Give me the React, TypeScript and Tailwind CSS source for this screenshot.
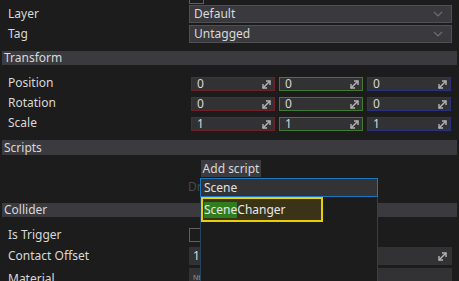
import React from "react";

const Expand = () => (
  <svg width="11" height="11" viewBox="0 0 11 11" className="shrink-0">
    <path d="M2 9 L9 2" stroke="#b4b4b4" strokeWidth="1.4" />
    <path d="M5 2 H9 V6" stroke="#b4b4b4" strokeWidth="1.4" fill="none" />
    <path d="M2 5 V9 H6" stroke="#b4b4b4" strokeWidth="1.4" fill="none" />
  </svg>
);

const Chevron = () => (
  <svg width="10" height="6" viewBox="0 0 10 6">
    <path d="M1 1 L5 5 L9 1" stroke="#6e6e72" strokeWidth="1.2" fill="none" />
  </svg>
);

const Dropdown = ({ value }: { value: string }) => (
  <div className="w-[263px] h-[18px] bg-[#3a3a3e] border border-[#505054] flex items-center justify-between pl-[4px] pr-[8px]">
    <span className="leading-none">{value}</span>
    <Chevron />
  </div>
);

const VecInput = ({ v, border }: { v: string; border: string }) => (
  <div className={`w-[84px] h-[14px] bg-[#323235] border ${border} flex items-center justify-between pl-[5px] pr-[2px]`}>
    <span className="leading-none">{v}</span>
    <Expand />
  </div>
);

const VecRow = ({ label, v }: { label: string; v: string }) => (
  <div className="h-[14px] flex items-center">
    <div className="w-[191px] pl-[8px] -mt-[3px]">{label}</div>
    <div className="flex gap-[4px]">
      <VecInput v={v} border="border-[#6e2228]" />
      <VecInput v={v} border="border-[#3f7a2e]" />
      <VecInput v={v} border="border-[#2a2f7e]" />
    </div>
  </div>
);

const Header = ({ title, h }: { title: string; h: string }) => (
  <div className={`mx-[2px] ${h} bg-[#3a3a3f] flex items-center pl-[2px] leading-none`}>{title}</div>
);

export default function App() {
  return (
    <div className="relative w-[459px] h-[281px] overflow-hidden bg-[#1c1c1c] text-[#d8d8d8] text-[12px] font-['Noto_Sans',sans-serif]">
      <div className="flex flex-col">
        <div className="h-[5px] relative">
          <div className="absolute left-[189px] top-[-11px] w-[15px] h-[15px] border border-[#606064] bg-[#1c1c1c]" />
        </div>
        <div className="h-[18px] flex items-center">
          <div className="w-[189px] pl-[8px]">Layer</div>
          <Dropdown value="Default" />
        </div>
        <div className="h-[18px] mt-[2px] flex items-center">
          <div className="w-[189px] pl-[8px]">Tag</div>
          <Dropdown value="Untagged" />
        </div>
        <div className="mt-[8px]">
          <Header title="Transform" h="h-[14px]" />
        </div>
        <div className="mt-[12px] flex flex-col gap-[6px]">
          <VecRow label="Position" v="0" />
          <VecRow label="Rotation" v="0" />
          <VecRow label="Scale" v="1" />
        </div>
        <div className="mt-[9px]">
          <Header title="Scripts" h="h-[15px]" />
        </div>
        <div className="mt-[5px] ml-[201px] w-[60px] h-[17px] bg-[#3c3c40] flex items-center justify-center leading-none">
          Add script
        </div>
        <div className="h-[20px] flex items-center">
          <div className="ml-[188px] text-[#4a4a4a] leading-none">Drag scripts here</div>
        </div>
        <div className="mt-[6px]">
          <Header title="Collider" h="h-[14px]" />
        </div>
        <div className="mt-[11px] h-[14px] flex items-center">
          <div className="w-[189px] pl-[8px]">Is Trigger</div>
          <div className="w-[14px] h-[14px] border border-[#606064]" />
        </div>
        <div className="mt-[5px] h-[18px] flex items-center">
          <div className="w-[189px] pl-[8px]">Contact Offset</div>
          <div className="w-[263px] h-[18px] bg-[#323235] flex items-center justify-between pl-[4px] pr-[4px]">
            <span className="leading-none">1</span>
            <Expand />
          </div>
        </div>
        <div className="mt-[3px] h-[18px] flex items-center">
          <div className="w-[189px] pl-[8px] mt-[4px]">Material</div>
          <div className="w-[263px] h-[18px] bg-[#323235] flex items-center pl-[4px]">
            <span className="text-[7px] text-[#999] leading-none">Nt</span>
          </div>
        </div>
      </div>

      <div className="absolute left-[200px] top-[178px] w-[178px] h-[110px] flex flex-col">
        <div className="h-[19px] bg-[#333336] border border-[#1a78c2] flex items-center pl-[3px] leading-none text-[#e0e0e0]">
          Scene
        </div>
        <div className="flex-1 bg-[#1c1c1c] border-x border-[#26445e]">
          <div className="w-[122px] h-[25px] border-2 border-[#e6cf0a] bg-[#3a3318] flex items-center leading-none pl-[1px]">
            <span className="bg-[#2f7d1f] text-[#e8e8e8] py-[2px]">Scene</span>
            <span className="text-[#e8e8e8]">Changer</span>
          </div>
        </div>
      </div>
    </div>
  );
}
